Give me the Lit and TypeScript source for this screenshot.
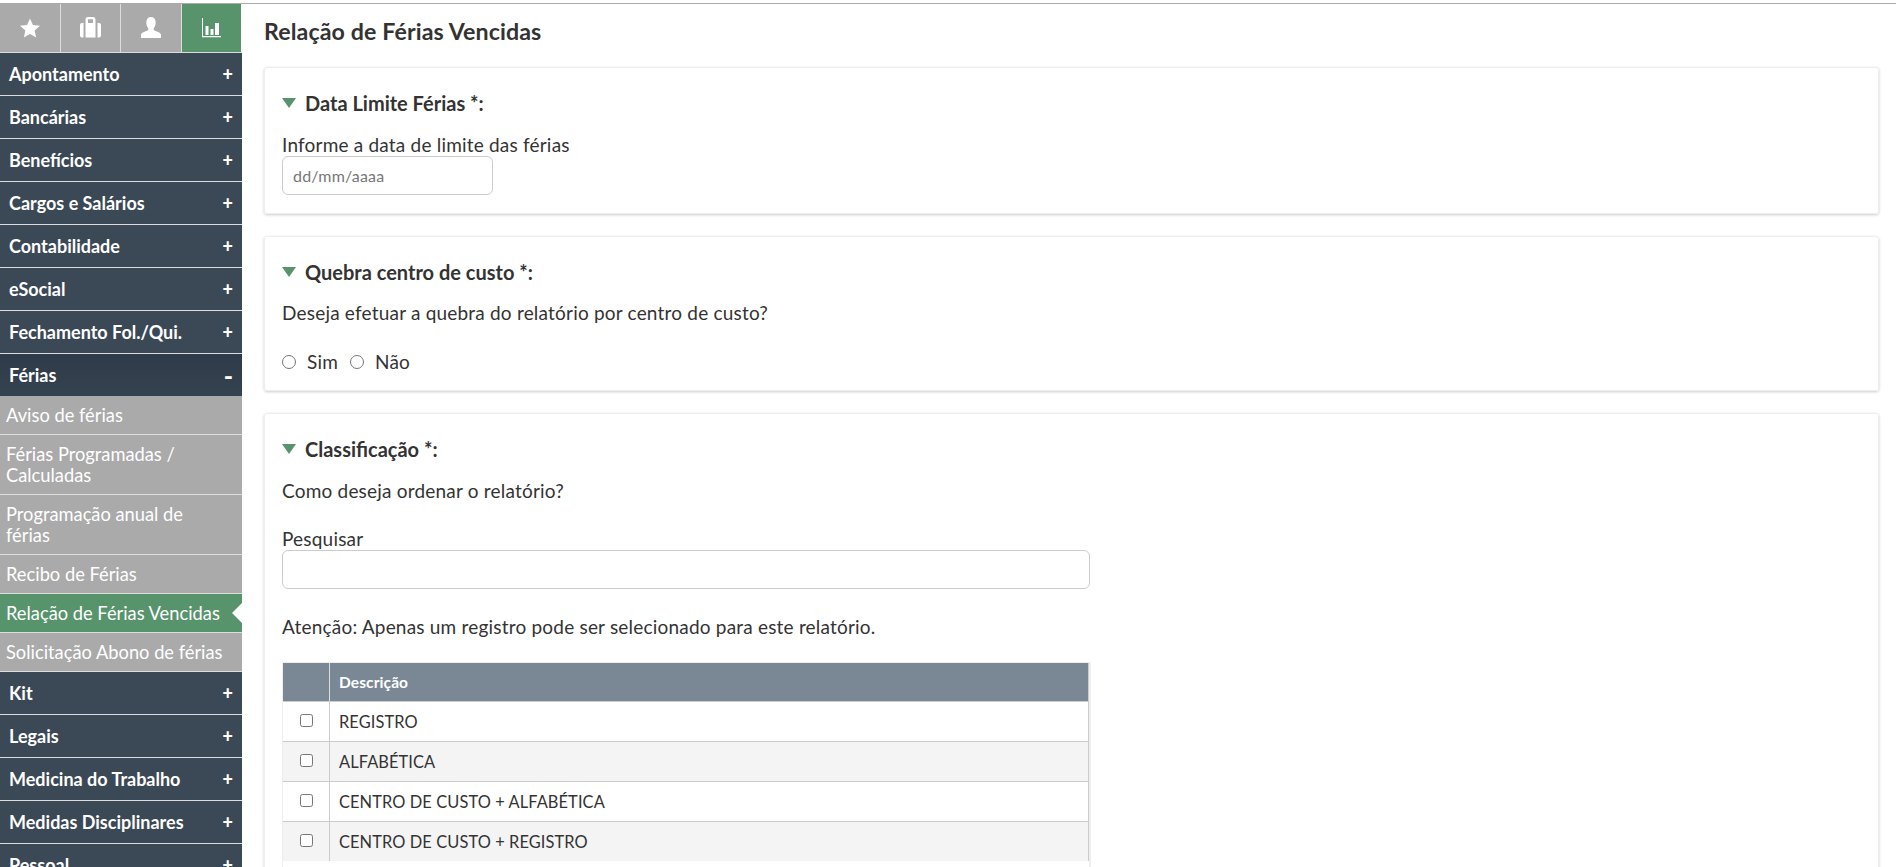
import { LitElement, html, css, svg } from "lit";
import { customElement } from "lit/decorators.js";

const before = ["Apontamento","Bancárias","Benefícios","Cargos e Salários","Contabilidade","eSocial","Fechamento Fol./Qui."];
const after = ["Kit","Legais","Medicina do Trabalho","Medidas Disciplinares","Pessoal"];
const subs: [string, boolean][] = [["Aviso de férias",false],["Férias Programadas / Calculadas",false],["Programação anual de férias",false],["Recibo de Férias",false],["Relação de Férias Vencidas",true],["Solicitação Abono de férias",false]];
const rows = ["REGISTRO","ALFABÉTICA","CENTRO DE CUSTO + ALFABÉTICA","CENTRO DE CUSTO + REGISTRO"];

@customElement("app-root")
export class AppRoot extends LitElement {
  static styles = css`
    :host { display:block; height:867px; overflow:hidden; background:#fff; color:#333; font-family:"Lato","Noto Sans",sans-serif; font-size:19px; letter-spacing:.2px; }
    * { box-sizing:border-box; }
    .top { height:4px; border-bottom:1px solid #aaa; }
    .page { display:flex; height:863px; overflow:hidden; }
    aside { width:242px; flex:none; letter-spacing:0; }
    .tabs { display:flex; height:49px; border-bottom:1px solid #ddd; }
    .tab { flex:1; background:#aaa; display:flex; align-items:center; justify-content:center; border-right:1px solid #ddd; padding-bottom:1px; }
    .tab:last-child { background:#57946c; border-right:0; margin-right:1px; }
    .tab svg { fill:#fff; display:block; }
    .m { height:43px; background:#3b4856; border-bottom:1px solid #ddd; color:#fff; font-weight:700; font-size:18px; display:flex; justify-content:space-between; align-items:center; padding:0 9px; }
    .m b { font-size:18px; }
    .m.open { background:linear-gradient(#2f3b48,#35424f); border-bottom:0; height:42px; }
    .m.open b { font-size:25px; line-height:20px; }
    .s { background:#aaa; color:#fff; font-size:18.300px; line-height:21px; padding:9px 14px 8px 6px; border-bottom:1px solid #ddd; position:relative; }
    .s.on { background:#57946c; }
    .s.on::after { content:""; position:absolute; right:0; top:50%; margin-top:-10px; border:10px solid transparent; border-right-color:#fff; border-left-width:0; }
    main { flex:1; padding:0 17px 0 22px; min-width:0; }
    h1 { margin:0; font-size:23.200px; font-weight:700; height:63px; line-height:54px; letter-spacing:.1px; }
    .card { border:1px solid #eee; border-radius:3px; box-shadow:0 1px 3px rgba(0,0,0,.2); padding:23px 18px 0 17px; margin-bottom:22px; }
    h2 { margin:0; font-size:20px; font-weight:700; line-height:24px; display:flex; align-items:center; gap:9px; letter-spacing:0; }
    .tri { width:0; height:0; border:7.500px solid transparent; border-top:10px solid #57946c; border-bottom:0; }
    p { margin:0; line-height:22px; }
    .m19 { margin-top:19px; } .m18 { margin-top:18px; } .m26 { margin-top:26px; } .m27 { margin-top:27px; }
    input[type=text] { display:block; border:1px solid #ccc; border-radius:6px; height:39px; padding:0 10px; font:16px "Lato",sans-serif; letter-spacing:.2px; background:#fff; }
    input::placeholder { color:#777; }
    .date { width:211px; margin-bottom:18px; }
    .radios { display:flex; align-items:center; height:22px; margin-bottom:17px; }
    .radios input { width:14px; height:14px; margin:-1px 11px 0 0; }
    .radios span { margin:-2px 12px 0 0; }
    .search { width:808px; }
    .table { width:809px; margin-top:24px; border:1px solid #eee; border-right-width:2px; border-bottom:0; font-size:16.400px; letter-spacing:.1px; }
    .tr { display:grid; grid-template-columns:47px 1fr; height:40px; border-bottom:1px solid #ccc; border-right:1px solid #ccc; }
    .tr:nth-last-child(2) { border-bottom:0; height:39px; }
    .tr > div { display:flex; align-items:center; padding-left:9px; }
    .tr > div:first-child { border-right:1px solid #ccc; padding-left:17px; }
    .tr.h { background:#7a8896; color:#fff; font-weight:700; font-size:15.500px; height:39px; }
    .tr.h > div:first-child { border-right-color:#ddd; }
    .tr.alt { background:#f4f4f4; }
    .tr input { width:13px; height:13px; margin:-2px 0 0; }
    .tail { height:40px; }
  `;
  star() { return svg`<svg width="20" height="20" viewBox="0 0 22 21"><path d="M11 0l3.200 7.200 7.800.8-5.900 5.200 1.700 7.800L11 17l-6.800 4 1.700-7.800L0 8l7.800-.8z"/></svg>`; }
  case_() { return svg`<svg width="21" height="21" viewBox="0 0 21 21"><path d="M0 8q0-2 2-2h1.500v14.500H2q-2 0-2-2zM19 6q2 0 2 2v10.500q0 2-2 2h-1.500V6z"/><path fill-rule="evenodd" d="M5.500 3Q5.500 0 8 0H13Q15.500 0 15.500 3V20.500H5.500ZM8 2.300V6H13V2.300Z"/></svg>`; }
  user() { return svg`<svg width="20" height="21" viewBox="0 0 20 21"><path d="M10 0c3 0 4.700 2 4.700 5.500 0 2.500-1 4.500-2 6v1.500c2 1.500 7.300 2 7.300 5v3H0v-3c0-3 5.300-3.500 7.300-5v-1.500c-1-1.500-2-3.500-2-6C5.300 2 7 0 10 0z"/></svg>`; }
  chart() { return svg`<svg width="19" height="20" viewBox="0 0 19 20"><path d="M0 0h1v18h18v1.200H0zM3.500 8h3v9h-3zM8.500 11h3v6h-3zM13 5h4v12h-4z"/></svg>`; }
  item(t: string) { return html`<div class="m"><span>${t}</span><b>+</b></div>`; }
  render() {
    return html`<div class="top"></div><div class="page"><aside>
      <div class="tabs"><div class="tab">${this.star()}</div><div class="tab">${this.case_()}</div><div class="tab">${this.user()}</div><div class="tab">${this.chart()}</div></div>
      ${before.map(t => this.item(t))}
      <div class="m open"><span>Férias</span><b>-</b></div>
      ${subs.map(([t,on]) => html`<div class="s ${on?"on":""}">${t}</div>`)}
      ${after.map(t => this.item(t))}
    </aside><main>
      <h1>Relação de Férias Vencidas</h1>
      <section class="card"><h2><i class="tri"></i>Data Limite Férias *:</h2>
        <p class="m19">Informe a data de limite das férias</p>
        <input class="date" type="text" placeholder="dd/mm/aaaa"></section>
      <section class="card"><h2><i class="tri"></i>Quebra centro de custo *:</h2>
        <p class="m18">Deseja efetuar a quebra do relatório por centro de custo?</p>
        <div class="radios m27"><input type="radio" name="q"><span>Sim</span><input type="radio" name="q"><span>Não</span></div></section>
      <section class="card"><h2><i class="tri"></i>Classificação *:</h2>
        <p class="m19">Como deseja ordenar o relatório?</p>
        <p class="m26">Pesquisar</p>
        <input class="search" type="text">
        <p class="m27">Atenção: Apenas um registro pode ser selecionado para este relatório.</p>
        <div class="table">
          <div class="tr h"><div></div><div>Descrição</div></div>
          ${rows.map((r,i) => html`<div class="tr ${i%2?"alt":""}"><div><input type="checkbox"></div><div>${r}</div></div>`)}
          <div class="tail"></div>
        </div></section>
    </main></div>`;
  }
}
